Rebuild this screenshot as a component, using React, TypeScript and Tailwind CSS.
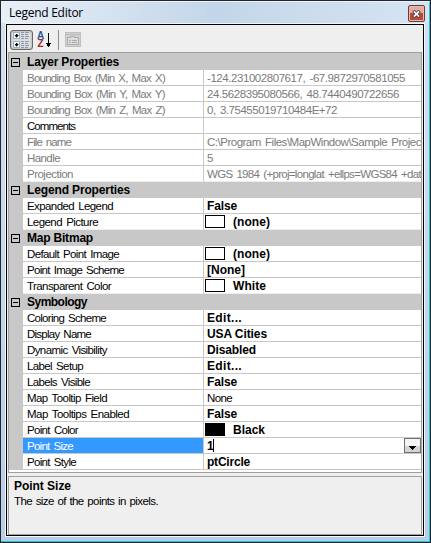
import { useLayoutEffect, useRef, useState } from "react";
import type { ReactNode } from "react";

// Single-line text whose tracking is computed so that it spans `w` pixels.
function Fit({ text, w, className = "" }: { text: string; w: number; className?: string }) {
  const ref = useRef<HTMLSpanElement>(null);
  const [spacing, setSpacing] = useState(0);
  useLayoutEffect(() => {
    if (ref.current) {
      const natural = ref.current.getBoundingClientRect().width;
      setSpacing((w - natural) / text.length);
    }
  }, [text, w]);
  return (
    <span ref={ref} className={`inline-block whitespace-pre ${className}`} style={{ letterSpacing: spacing }}>
      {text}
    </span>
  );
}

type Row = {
  name: string;
  nw: number;
  value?: string;
  vw?: number;
  muted?: boolean;
  plain?: boolean;
  swatch?: "white" | "black";
  active?: boolean;
};

const groups: { title: string; w: number; rows: Row[] }[] = [
  {
    title: "Layer Properties",
    w: 92,
    rows: [
      { name: "Bounding Box (Min X, Max X)", nw: 138, value: "-124.231002807617, -67.9872970581055", vw: 198, muted: true },
      { name: "Bounding Box (Min Y, Max Y)", nw: 138, value: "24.5628395080566, 48.7440490722656", vw: 192, muted: true },
      { name: "Bounding Box (Min Z, Max Z)", nw: 138, value: "0, 3.75455019710484E+72", vw: 130, muted: true },
      { name: "Comments", nw: 48 },
      { name: "File name", nw: 44, value: "C:\\Program Files\\MapWindow\\Sample Projec", vw: 214, muted: true },
      { name: "Handle", nw: 33, value: "5", vw: 6, muted: true },
      { name: "Projection", nw: 46, value: "WGS 1984 (+proj=longlat +ellps=WGS84 +dat", vw: 214, muted: true },
    ],
  },
  {
    title: "Legend Properties",
    w: 103,
    rows: [
      { name: "Expanded Legend", nw: 86, value: "False", vw: 30 },
      { name: "Legend Picture", nw: 71, value: "(none)", vw: 37, swatch: "white" },
    ],
  },
  {
    title: "Map Bitmap",
    w: 66,
    rows: [
      { name: "Default Point Image", nw: 92, value: "(none)", vw: 37, swatch: "white" },
      { name: "Point Image Scheme", nw: 97, value: "[None]", vw: 38 },
      { name: "Transparent Color", nw: 84, value: "White", vw: 33, swatch: "white" },
    ],
  },
  {
    title: "Symbology",
    w: 60,
    rows: [
      { name: "Coloring Scheme", nw: 79, value: "Edit...", vw: 35 },
      { name: "Display Name", nw: 64, value: "USA Cities", vw: 60 },
      { name: "Dynamic Visibility", nw: 80, value: "Disabled", vw: 49 },
      { name: "Label Setup", nw: 56, value: "Edit...", vw: 35 },
      { name: "Labels Visible", nw: 63, value: "False", vw: 30 },
      { name: "Map Tooltip Field", nw: 80, value: "None", vw: 25, plain: true },
      { name: "Map Tooltips Enabled", nw: 102, value: "False", vw: 30 },
      { name: "Point Color", nw: 51, value: "Black", vw: 32, swatch: "black" },
      { name: "Point Size", nw: 46, value: "1", vw: 6, active: true },
      { name: "Point Style", nw: 49, value: "ptCircle", vw: 43 },
    ],
  },
];

function Minus() {
  return (
    <span className="ml-[2px] flex size-[9px] shrink-0 items-center justify-center border border-black">
      <span className="h-px w-[5px] bg-black" />
    </span>
  );
}

function PropertyRow({ row, last }: { row: Row; last: boolean }) {
  const line = last ? "border-b-[#eeeeee]" : "border-b-[#c8c8c8]";
  const tone = row.muted ? "text-[#7b7b7b]" : "text-black";
  return (
    <div className="flex h-4">
      <div className="w-[14px] shrink-0 bg-[#c8c8c8]" />
      <div
        className={`flex w-[180px] shrink-0 items-center border-b pl-1 text-[11.5px] [word-spacing:1.5px] ${line} ${
          row.active ? "bg-[#3399ff] text-white" : tone
        }`}
      >
        <Fit text={row.name} w={row.nw} />
      </div>
      <div className={`flex min-w-0 flex-1 items-center overflow-hidden border-b border-l border-l-[#c8c8c8] ${line} ${tone}`}>
        {row.swatch && (
          <span
            className={`ml-px h-[13px] w-5 shrink-0 border border-black ${row.swatch === "black" ? "bg-black" : "bg-white"}`}
          />
        )}
        {row.value && (
          <Fit
            text={row.value}
            w={row.vw ?? 0}
            className={`${row.swatch ? "ml-2" : "ml-[3px]"} ${
              row.muted || row.plain ? "text-[11.5px] [word-spacing:1.5px]" : "font-bold"
            }`}
          />
        )}
        {row.active && (
          <>
            <span className="h-[13px] w-px bg-black" />
            <span className="ml-auto flex h-[15px] w-[17px] shrink-0 items-center justify-center border border-[#707070] bg-linear-to-b from-[#f4f4f4] from-50% to-[#d4d4d4] to-50% pt-1">
              <svg width="7" height="4" viewBox="0 0 7 4" shapeRendering="crispEdges">
                <path d="M0 0H7V1H6V2H5V3H4V4H3V3H2V2H1V1H0Z" fill="#000" />
              </svg>
            </span>
          </>
        )}
      </div>
    </div>
  );
}

function CategorizedIcon() {
  return (
    <svg width="17" height="16" viewBox="0 0 17 16" shapeRendering="crispEdges">
      {[0, 9].map((y) => (
        <g key={y} transform={`translate(0 ${y})`}>
          <rect x=".5" y=".5" width="6" height="6" fill="#fff" stroke="#9db4cc" />
          <path d="M2 3h3v1H2zM3 2h1v3H3z" fill="#000" stroke="#000" strokeWidth=".4" />
          <path d="M8 0h3v1H8zM8 2h3v1H8zM8 4h3v1H8zM8 6h3v1H8zM12 0h4v1h-4zM12 2h3v1h-3zM12 4h4v1h-4zM12 6h3v1h-3z" fill="#8798ac" />
        </g>
      ))}
    </svg>
  );
}

function SortIcon() {
  return (
    <div className="flex">
      <div className="flex w-[9px] flex-col items-center text-[10px] leading-[8px] font-bold">
        <span className="text-[#2857a5]">A</span>
        <span className="text-[#a52c2c]">Z</span>
      </div>
      <svg width="6" height="16" viewBox="0 0 6 16" shapeRendering="crispEdges">
        <path d="M3 1h1v10h2v1H5v2H4v1H3v-1H2v-2H1v-1h2z" fill="#000" />
      </svg>
    </div>
  );
}

function PagesIcon() {
  return (
    <svg width="16" height="15" viewBox="0 0 16 15" shapeRendering="crispEdges" fill="none">
      <rect x=".5" y=".5" width="15" height="14" fill="#d0d0d0" stroke="#c0c0c0" />
      <path d="M1 2h14v1H1z" fill="#bdbdbd" />
      <path d="M2.5 5.5h3v-1h4v1h4v7h-11z" fill="#dedede" stroke="#aeaeae" />
      <path d="M4 8h2v1H4zM7 8h5v1H7zM4 10h2v1H4zM7 10h5v1H7z" fill="#aaa" />
    </svg>
  );
}

function Frame({ children }: { children: ReactNode }) {
  return (
    <div className="mx-[4px] flex h-[514px] flex-col border border-[#f2f8ff] border-t-[#eef4fa]">
      <div className="flex min-h-0 flex-1 flex-col border border-black bg-[#efefef] px-px pb-px">{children}</div>
    </div>
  );
}

export default function App() {
  return (
    <div className="h-[543px] w-[431px] overflow-hidden border border-[#25252f] bg-[#25252f] font-['Liberation_Sans',Arial,sans-serif] text-[12px] leading-[14px]">
      <div className="flex h-[541px] flex-col border-t border-r border-b border-t-[#eaf4fb] border-r-[#20c0de] border-b-[#20c0de] bg-linear-to-b from-[#d3e1ef] via-[#c5d7ea] to-[#b9cde5]">
        <div className="flex h-[21px] shrink-0 items-start justify-between bg-linear-to-r from-[#e8eff7] via-[#c3d6e9] to-[#d6e4f2] pr-[4px] pl-[8px]">
          <Fit text="Legend Editor" w={74} className="mt-[2px] font-['Open_Sans','Noto_Sans',sans-serif] leading-[17px]" />
          <span className="mt-[3px] flex h-[17px] w-[17px] items-center justify-center rounded-[2px] border border-[#5b4049] bg-linear-to-b from-[#e7a99a] from-45% to-[#c5472e] to-50% shadow-[inset_0_0_0_1px_#efb7a8]">
            <svg width="9" height="8" viewBox="0 0 9 8">
              <path d="M2.5 2L6.5 6M6.5 2L2.5 6" stroke="#444b5c" strokeWidth="3.4" strokeLinecap="square" />
              <path d="M2.5 2L6.5 6M6.5 2L2.5 6" stroke="#fff" strokeWidth="1.6" strokeLinecap="square" />
            </svg>
          </span>
        </div>
        <Frame>
          <div className="flex h-[27px] shrink-0 items-center pt-[2px] pl-[2px]">
            <span className="flex h-[20px] w-[23px] items-center justify-center rounded-[3px] border border-[#686868] bg-[#dedede] shadow-[inset_0_0_2px_#888]">
              <CategorizedIcon />
            </span>
            <span className="ml-[3px]">
              <SortIcon />
            </span>
            <span className="ml-[7px] h-[20px] w-px bg-[#8c8c8c]" />
            <span className="ml-[6px]">
              <PagesIcon />
            </span>
          </div>
          <div className="flex h-[421px] shrink-0 flex-col border border-[#a0a0a0] bg-white">
            <div className="h-px shrink-0 bg-[#c8c8c8]" />
            {groups.map((g, gi) => (
              <div key={g.title}>
                <div className="flex h-4 items-center bg-[#c8c8c8]">
                  <Minus />
                  <Fit text={g.title} w={g.w} className="ml-[7px] font-bold" />
                </div>
                {g.rows.map((r, i) => (
                  <PropertyRow key={r.name} row={r} last={i === g.rows.length - 1 && gi < groups.length - 1} />
                ))}
              </div>
            ))}
          </div>
          <div className="mt-[3px] flex h-[59px] shrink-0 flex-col items-start border border-[#a0a0a0] pt-[2px] pl-[5px]">
            <Fit text="Point Size" w={57} className="font-bold" />
            <Fit text="The size of the points in pixels." w={144} className="mt-[1px] text-[11.5px] [word-spacing:1px]" />
          </div>
        </Frame>
      </div>
    </div>
  );
}
